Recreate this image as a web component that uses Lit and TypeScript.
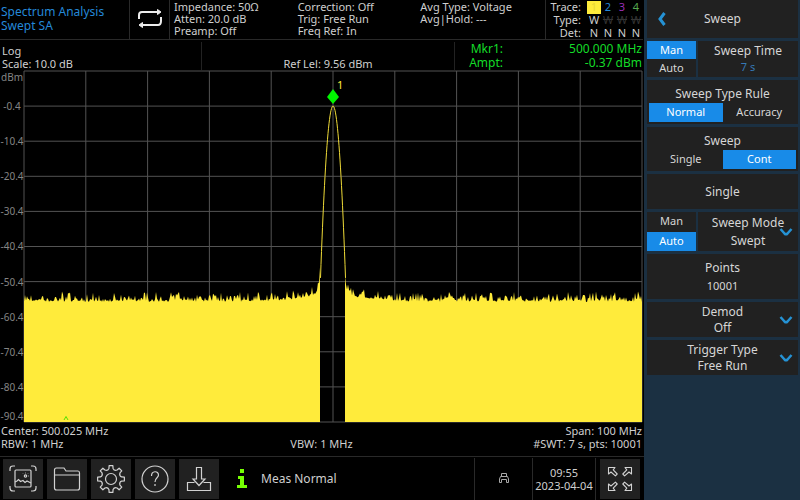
import { LitElement, html, svg, css } from "lit";
import { customElement, state } from "lit/decorators.js";
import { classMap } from "lit/directives/class-map.js";

const W = 618;
const H = 351;
const LEFT_EDGE = 296;
const RIGHT_EDGE = 321;
const CENTER = 309;

/* Noise floor with a low skirt near the carrier. */
function floorTrace(from: number, to: number): string {
  let seed = 17 + from;
  const rnd = () => {
    seed = (seed * 16807) % 2147483647;
    return seed / 2147483647;
  };
  const pts: string[] = [`${from},${H}`];
  for (let x = from; x <= to; x++) {
    const d = x < CENTER ? LEFT_EDGE - x : x - RIGHT_EDGE;
    const skirt = 9 * Math.exp(-d / 20) + 16 * Math.exp(-d / 1.5);
    const r = rnd();
    const y = 231 - skirt - r * r * r * 9 - rnd() * 2;
    pts.push(`${x},${y.toFixed(1)}`);
  }
  pts.push(`${to},${H}`);
  return pts.join(" ");
}

function carrierTrace(): string {
  const pts: string[] = [];
  for (let dx = -12.5; dx <= 12.5; dx += 0.5) {
    pts.push(`${CENTER + dx},${(35 + dx * dx * 1.1).toFixed(1)}`);
  }
  return pts.join(" ");
}

const chevron = html`<svg class="chev" viewBox="0 0 14 8" aria-hidden="true">
  <path d="M1.500 1L5.500 5.500Q7 7 8.500 5.500L12.500 1" />
</svg>`;

const icons = {
  shot: svg`<path d="M7 12V10Q7 7 10 7H12M28 7H30Q33 7 33 10V12M33 27V29Q33 32 30 32H28M12 32H10Q7 32 7 29V27"/>
    <rect x="12" y="11" width="16" height="17" rx="1"/>
    <path d="M12 23L14 22L15.500 20.500L17.500 22.500L20 21.500L22 23.500L24 22L26 23L28 24"/><circle cx="22.500" cy="17" r="1.200"/>
    <path d="M22.500 14.500V13.500M25 17H26M20.500 15L20 14.500M24.500 15L25 14.500" stroke-width=".7"/>`,
  folder: svg`<path d="M7.500 29V11Q7.500 9 9.500 9H17L19 12H31Q32.500 12 32.500 14V29Q32.500 31 30.500 31H9.500Q7.500 31 7.500 29ZM7.500 16H32.500"/>`,
  help: svg`<circle cx="20" cy="20" r="13"/><path d="M16.500 17C16.500 11.500 23.500 11.500 23.500 16C23.500 19 20 18.500 20 23M20 25V27"/>`,
  save: svg`<path d="M17.500 8.500H22.500V20H26L20 26.500L14 20H17.500ZM15.500 23.500H8.500V31.500H31.500V23.500H24.500"/>`,
  full: svg`<g stroke-linejoin="round" stroke-width="1.100">
    <path d="M8.500 8.500H15L13.200 10.800L17.200 15L15.400 16.800L11 13L8.500 15Z"/>
    <path d="M31.500 8.500H25L26.800 10.800L22.800 15L24.600 16.800L29 13L31.500 15Z"/>
    <path d="M8.500 31.500H15L13.200 29.200L17.200 25L15.400 23.200L11 27L8.500 25Z"/>
    <path d="M31.500 31.500H25L26.800 29.200L22.800 25L24.600 23.200L29 27L31.500 25Z"/></g>`,
};

function gearPath(): string {
  const pts: string[] = [];
  const at = (deg: number, r: number) => {
    const a = (deg * Math.PI) / 180;
    return `${(20 + r * Math.cos(a)).toFixed(2)} ${(20 + r * Math.sin(a)).toFixed(2)}`;
  };
  for (let i = 0; i < 8; i++) {
    const c = i * 45;
    pts.push(`${i ? "L" : "M"}${at(c - 8, 13.5)}L${at(c + 8, 13.5)}L${at(c + 11, 10.8)}`);
    pts.push(`Q${at(c + 22.5, 8.6)} ${at(c + 34, 10.8)}`);
  }
  return pts.join("") + "Z";
}

@customElement("spectrum-plot")
class SpectrumPlot extends LitElement {
  static styles = css`
    :host {
      display: grid;
      grid-template-columns: 24px minmax(0, 1fr);
      padding-right: 2px;
      color: #858585;
      font-size: 10px;
      line-height: 12px;
      min-height: 0;
    }
    .scale {
      display: grid;
      grid-template-rows: repeat(10, minmax(0, 1fr));
      white-space: nowrap;
    }
    .scale div {
      display: flex;
      align-items: flex-end;
      justify-content: center;
      margin-bottom: -6px;
    }
    .scale .first {
      flex-direction: column;
      justify-content: space-between;
      align-items: center;
    }
    .scale .last {
      margin-bottom: 0;
    }
    .area {
      position: relative;
      min-height: 0;
    }
    .graph {
      display: block;
      width: 100%;
      height: 100%;
      overflow: visible;
    }
    .marker {
      position: absolute;
      left: 50%;
      top: 10%;
      width: 24px;
      height: 30px;
      margin: -30px 0 0 -6px;
      color: #ffeb3b;
      font-size: 11px;
    }
    .marker svg {
      position: absolute;
      left: 0;
      bottom: 1px;
      width: 12px;
      height: 16px;
      fill: #00f500;
    }
    .marker span {
      position: absolute;
      left: 10px;
      top: 3px;
    }
  `;

  render() {
    const n = [0, 1, 2, 3, 4, 5, 6, 7, 8, 9, 10];
    return html`
      <div class="scale">
        <div class="first"><span>dBm</span><span>-0.4</span></div>
        ${[1, 2, 3, 4, 5, 6, 7, 8].map((i) => html`<div>-${i}0.4</div>`)}
        <div class="last">-90.4</div>
      </div>
      <div class="area">
        <svg class="graph" viewBox="0 0 ${W} ${H}" preserveAspectRatio="none" role="img" aria-label="Spectrum trace">
          <g stroke="#535353" stroke-width="1">
            ${n.map((i) => svg`<line x1=${i * W / 10} x2=${i * W / 10} y1="0" y2=${H} />`)}
            ${n.map((i) => svg`<line y1=${i * H / 10} y2=${i * H / 10} x1="0" x2=${W} />`)}
          </g>
          <polygon points=${floorTrace(0, LEFT_EDGE)} fill="#ffeb3b" />
          <polygon points=${floorTrace(RIGHT_EDGE, W)} fill="#ffeb3b" />
          <polyline points=${carrierTrace()} fill="none" stroke="#f0dc38" stroke-width="1" />
          <path d="M40 349L42 345.500L44 349" fill="none" stroke="#58e000" />
        </svg>
        <div class="marker">
          <svg viewBox="0 0 12 16"><path d="M6 0L12 8L6 15L0 8Z" /></svg><span>1</span>
        </div>
      </div>
    `;
  }
}

@customElement("sweep-menu")
class SweepMenu extends LitElement {
  @state() private time = "Man";
  @state() private rule = "Normal";
  @state() private sweep = "Cont";
  @state() private mode = "Auto";

  static styles = css`
    :host {
      display: flex;
      flex-direction: column;
      gap: 3px;
      background: #1b3042;
      padding: 0 2px 0 3px;
      font-size: 12px;
      line-height: 16px;
      color: #d6d6d6;
    }
    button {
      font: inherit;
      color: inherit;
      border: 0;
      border-radius: 0;
      padding: 0;
      margin: 0;
      background: #212121;
      cursor: pointer;
    }
    .head {
      display: grid;
      grid-template-columns: 30px 1fr 30px;
      align-items: center;
      height: 38px;
      background: #212121;
      text-align: center;
    }
    .head svg {
      display: block;
      width: 8px;
      height: 14px;
      margin: 0 auto;
      fill: none;
      stroke: #2592d4;
      stroke-width: 3;
    }
    .split {
      display: grid;
      grid-template-columns: 49px 1fr;
      gap: 2px;
      min-height: 36px;
    }
    .split.tall {
      min-height: 39px;
    }
    .toggle {
      display: grid;
      grid-template-rows: 1fr 1fr;
      background: #212121;
    }
    .opt {
      font-size: 11px;
      padding-bottom: 1px;
    }
    .opt.on {
      background: #188be8;
      color: #fff;
    }
    .item {
      position: relative;
      display: flex;
      flex-direction: column;
      justify-content: center;
      align-items: center;
      min-height: 35px;
    }
    .item.loose {
      line-height: 18px;
    }
    .item.high {
      min-height: 45px;
    }
    .small {
      font-size: 11px;
    }
    .blue {
      color: #3578b5;
    }
    .choice {
      background: #212121;
      text-align: center;
      min-height: 44px;
      box-sizing: border-box;
      padding: 6px 2px 2px;
      display: flex;
      flex-direction: column;
      justify-content: space-between;
    }
    .pair {
      display: grid;
      grid-template-columns: 1fr 1fr;
      height: 19px;
    }
    .chev {
      position: absolute;
      right: 5px;
      top: 50%;
      margin-top: -4px;
      width: 14px;
      height: 8px;
      fill: none;
      stroke: #2592d4;
      stroke-width: 2.5;
    }
  `;

  private option(label: string, current: string, pick: (v: string) => void) {
    const on = label === current;
    return html`<button class=${classMap({ opt: true, on })} aria-pressed=${on} @click=${() => pick(label)}>${label}</button>`;
  }

  render() {
    const time = (v: string) => (this.time = v);
    const rule = (v: string) => (this.rule = v);
    const sweep = (v: string) => (this.sweep = v);
    const mode = (v: string) => (this.mode = v);
    return html`
      <div class="head">
        <button aria-label="Back"><svg viewBox="0 0 8 14"><path d="M6.500 1L2 7L6.500 13" /></svg></button>
        <span>Sweep</span>
      </div>
      <div class="split">
        <div class="toggle">${this.option("Man", this.time, time)}${this.option("Auto", this.time, time)}</div>
        <button class="item"><span>Sweep Time</span><span class="small blue">7 s</span></button>
      </div>
      <div class="choice">
        <span>Sweep Type Rule</span>
        <div class="pair">${this.option("Normal", this.rule, rule)}${this.option("Accuracy", this.rule, rule)}</div>
      </div>
      <div class="choice">
        <span>Sweep</span>
        <div class="pair">${this.option("Single", this.sweep, sweep)}${this.option("Cont", this.sweep, sweep)}</div>
      </div>
      <button class="item">Single</button>
      <div class="split tall">
        <div class="toggle">${this.option("Man", this.mode, mode)}${this.option("Auto", this.mode, mode)}</div>
        <button class="item loose"><span>Sweep Mode</span><span>Swept</span>${chevron}</button>
      </div>
      <button class="item loose high"><span>Points</span><span class="small">10001</span></button>
      <button class="item"><span>Demod</span><span>Off</span>${chevron}</button>
      <button class="item"><span>Trigger Type</span><span>Free Run</span>${chevron}</button>
    `;
  }
}

@customElement("app-root")
class AppRoot extends LitElement {
  static styles = css`
    :host {
      display: grid;
      grid-template-columns: minmax(0, 1fr) 156px;
      min-height: 100vh;
      background: #000;
      color: #cfcfcf;
      font-family: "Noto Sans", "Open Sans", sans-serif;
      font-size: 11px;
      line-height: 14px;
      white-space: nowrap;
    }
    .main {
      display: grid;
      grid-template-rows: 40px 31px minmax(0, 1fr) 34px 44px;
      min-width: 0;
    }
    .top {
      display: grid;
      grid-template-columns: 130px 40px minmax(0, 1fr) 97px;
      border-bottom: 1px solid #292929;
      box-sizing: border-box;
      margin-right: 1px;
    }
    .title {
      color: #2488d8;
      font-size: 12px;
      padding: 5px 1px;
      border-right: 1px solid #292929;
    }
    .loop {
      display: grid;
      place-items: center;
      border-right: 1px solid #292929;
    }
    .loop svg {
      width: 26px;
      height: 22px;
      fill: none;
      stroke: #ececec;
      stroke-width: 2;
    }
    .info {
      display: grid;
      grid-template-columns: 124fr 123fr 125fr;
      padding: 1px 0 0 4px;
      line-height: 12px;
      border-right: 1px solid #292929;
    }
    .traces {
      border-collapse: collapse;
      line-height: 12px;
      margin: 1px 0 0 auto;
    }
    .traces td,
    .traces th {
      padding: 0;
      font-weight: 400;
      text-align: center;
      min-width: 14px;
    }
    .traces th:first-child {
      text-align: right;
      padding-right: 6px;
    }
    .t1 { background: #ffeb3b; color: #e8d636; }
    .t2 { color: #2488d8; }
    .t3 { color: #9a2fb5; }
    .t4 { color: #55a84f; }
    .off { color: #343434; }
    .levels {
      display: grid;
      grid-template-columns: 202fr 253fr 187fr;
      padding: 2px 2px 2px 0;
    }
    .levels > div {
      border-right: 1px solid #222;
      display: flex;
      flex-direction: column;
      justify-content: flex-end;
      line-height: 13px;
    }
    .levels .scale { padding-left: 2px; }
    .levels .ref { text-align: center; }
    .levels .mkr {
      display: grid;
      grid-template-columns: 48px 1fr;
      align-content: end;
      text-align: right;
      color: #14dc28;
      font-size: 12px;
      line-height: 14px;
      border: 0;
    }
    .axis {
      display: grid;
      grid-template-columns: 1fr 1fr 1fr;
      padding: 2px 2px 0 1px;
      grid-auto-rows: 13px;
    }
    .mid { text-align: center; }
    .end { justify-self: end; }
    .bar {
      display: flex;
      align-items: center;
      gap: 4px;
      padding: 0 4px 0 3px;
      border-top: 1px solid #292929;
      box-sizing: border-box;
    }
    .tool {
      width: 40px;
      height: 40px;
      flex: none;
      padding: 0;
      border: 0;
      background: #212121;
      cursor: pointer;
    }
    .tool svg {
      display: block;
      width: 40px;
      height: 40px;
      fill: none;
      stroke: #d2d2d2;
      stroke-width: 1.2;
    }
    .status {
      flex: 1;
      display: flex;
      align-items: center;
      gap: 14px;
      padding-left: 14px;
      font-size: 12px;
    }
    .status svg {
      width: 10px;
      height: 20px;
      fill: #76ff03;
    }
    .usb {
      display: grid;
      place-items: center;
      width: 57px;
      height: 42px;
      border: solid #292929;
      border-width: 0 1px;
      margin-right: -4px;
    }
    .usb svg {
      width: 10px;
      height: 12px;
      fill: none;
      stroke: #a8a8a8;
    }
    .clock {
      width: 62px;
      height: 42px;
      display: grid;
      align-content: center;
      text-align: center;
      border-right: 1px solid #292929;
      line-height: 13px;
    }
  `;

  private tool(label: string, shape: unknown) {
    return html`<button class="tool" aria-label=${label}><svg viewBox="0 0 40 40">${shape}</svg></button>`;
  }

  render() {
    return html`
      <main class="main">
        <header class="top">
          <div class="title">Spectrum Analysis<br />Swept SA</div>
          <div class="loop">
            <svg viewBox="0 0 26 22" aria-label="Continuous sweep">
              <path d="M2 10V6Q2 3 5 3H22M24 8V12Q24 16 21 16H4" />
              <path d="M20.500 .5L24 3L20.500 5.500ZM5.500 13.500L2 16L5.500 18.500Z" fill="#ececec" stroke-width="1" />
            </svg>
          </div>
          <div class="info">
            <div>Impedance: 50Ω<br />Atten: 20.0 dB<br />Preamp: Off</div>
            <div>Correction: Off<br />Trig: Free Run<br />Freq Ref: In</div>
            <div>Avg Type: Voltage<br />Avg|Hold: ---</div>
          </div>
          <table class="traces">
            <tr><th>Trace:</th><th class="t1">1</th><th class="t2">2</th><th class="t3">3</th><th class="t4">4</th></tr>
            <tr><th>Type:</th><td>W</td><td class="off"><s>W</s></td><td class="off"><s>W</s></td><td class="off"><s>W</s></td></tr>
            <tr><th>Det:</th><td>N</td><td>N</td><td>N</td><td>N</td></tr>
          </table>
        </header>
        <section class="levels">
          <div class="scale"><span>Log</span><span>Scale: 10.0 dB</span></div>
          <div class="ref">Ref Lel: 9.56 dBm</div>
          <div class="mkr"><span>Mkr1:</span><span>500.000 MHz</span><span>Ampt:</span><span>-0.37 dBm</span></div>
        </section>
        <spectrum-plot></spectrum-plot>
        <section class="axis">
          <span>Center: 500.025 MHz</span><span></span><span class="end">Span: 100 MHz</span>
          <span>RBW: 1 MHz</span><span class="mid">VBW: 1 MHz</span><span class="end">#SWT: 7 s, pts: 10001</span>
        </section>
        <footer class="bar">
          ${this.tool("Screenshot", icons.shot)}
          ${this.tool("Files", icons.folder)}
          ${this.tool("Settings", svg`<path d=${gearPath()} stroke-linejoin="round" /><circle cx="20" cy="20" r="5.500" />`)}
          ${this.tool("Help", icons.help)}
          ${this.tool("Save", icons.save)}
          <div class="status">
            <svg viewBox="0 0 10 20" aria-hidden="true"><path d="M3 0H7V4H3ZM1 7H7V16H10V19H0V16H3V10H1Z" /></svg>
            <span>Meas Normal</span>
          </div>
          <div class="usb">
            <svg viewBox="0 0 10 12" aria-label="USB"><path d="M2.500 3.500V.500H7.500V3.500M2.500 9.500H.500V6L1.500 3.500H8.500L9.500 6V9.500H7.500V6.500H2.500V9.500" /></svg>
          </div>
          <div class="clock"><span>09:55</span><span>2023-04-04</span></div>
          ${this.tool("Full screen", icons.full)}
        </footer>
      </main>
      <sweep-menu></sweep-menu>
    `;
  }
}
